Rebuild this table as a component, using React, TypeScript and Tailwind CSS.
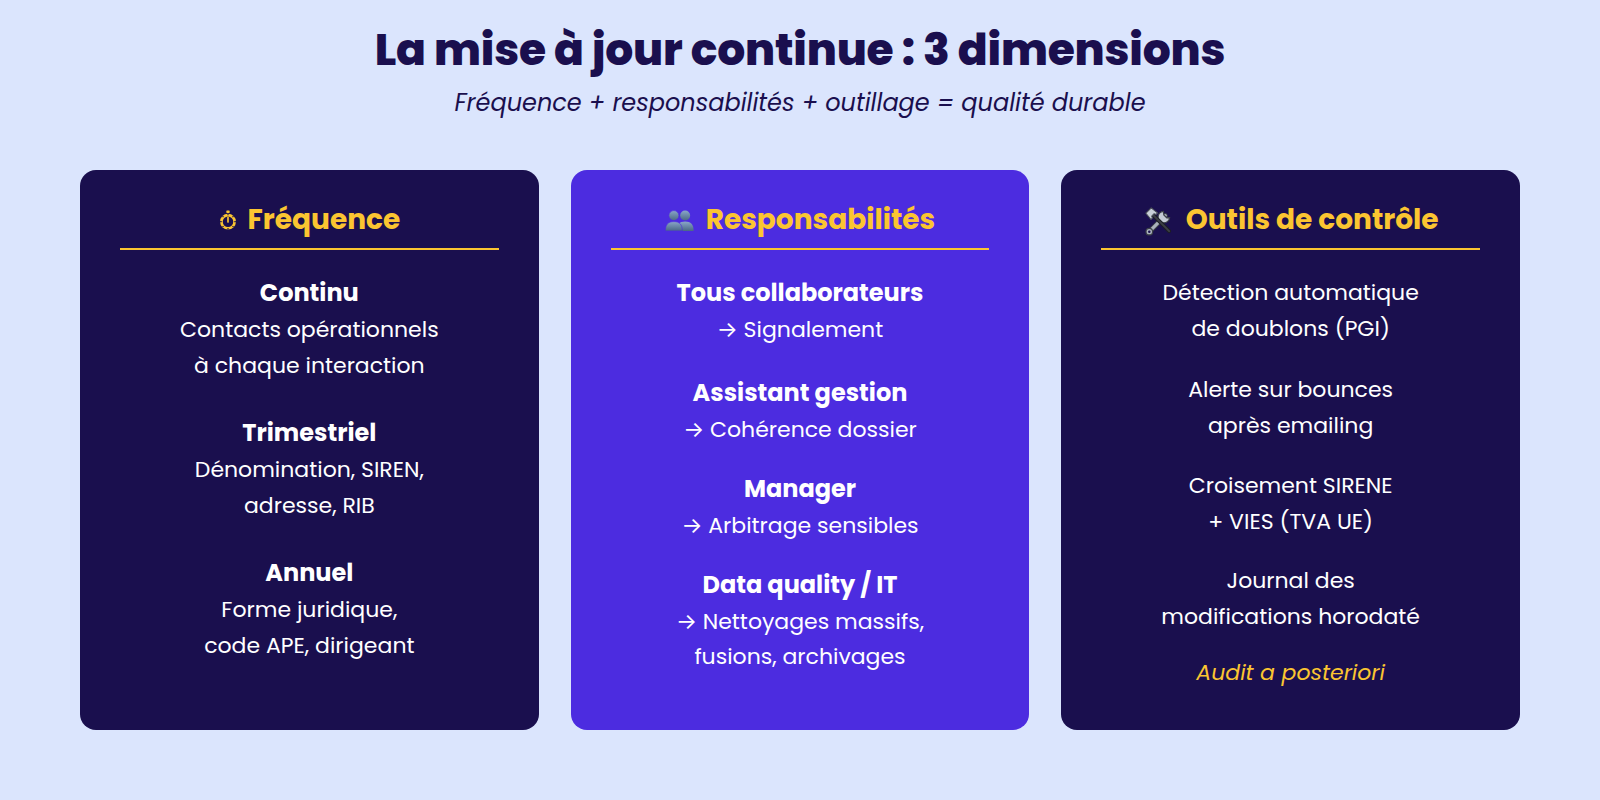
import React from "react";

const Stopwatch = () => (
  <svg width="20" height="20" viewBox="0 0 24 24" aria-hidden="true">
    <rect x="10" y="0.5" width="4" height="3" rx="0.8" fill="#fbc531" />
    <circle cx="12" cy="14" r="9.5" fill="#fbc531" />
    <circle cx="12" cy="14" r="6.3" fill="#1a0f4e" />
    <g stroke="#1a0f4e" strokeWidth="1.4">
      <line x1="12" y1="4.6" x2="12" y2="6.4" />
      <line x1="12" y1="21.6" x2="12" y2="23.4" />
      <line x1="2.6" y1="14" x2="4.4" y2="14" />
      <line x1="19.6" y1="14" x2="21.4" y2="14" />
      <line x1="5.4" y1="7.4" x2="6.6" y2="8.6" />
      <line x1="17.4" y1="19.4" x2="18.6" y2="20.6" />
      <line x1="18.6" y1="7.4" x2="17.4" y2="8.6" />
      <line x1="6.6" y1="19.4" x2="5.4" y2="20.6" />
    </g>
    <line x1="12" y1="14.5" x2="12" y2="9" stroke="#fbc531" strokeWidth="2" strokeLinecap="round" />
  </svg>
);

const Busts = () => (
  <svg width="29" height="22" viewBox="0 0 36 27" aria-hidden="true">
    <defs>
      <linearGradient id="bust" x1="0" y1="0" x2="0" y2="1">
        <stop offset="0" stopColor="#8aa6c8" />
        <stop offset="1" stopColor="#4a6886" />
      </linearGradient>
    </defs>
    <circle cx="25" cy="8" r="6.2" fill="url(#bust)" />
    <path d="M14 27 C14 19 18 15.5 25 15.5 C32 15.5 35.5 19 35.5 27 Z" fill="url(#bust)" />
    <circle cx="11" cy="8" r="6.2" fill="url(#bust)" stroke="#4c2ce0" strokeWidth="0.8" />
    <path d="M0.5 27 C0.5 19 4 15.5 11 15.5 C18 15.5 21.5 19 21.5 27 Z" fill="url(#bust)" stroke="#4c2ce0" strokeWidth="0.8" />
  </svg>
);

const Tools = () => (
  <svg width="31" height="31" viewBox="0 0 32 32" aria-hidden="true">
    {/* wrench */}
    <path d="M7 27 L23 11" stroke="#3b3f47" strokeWidth="5.2" strokeLinecap="round" />
    <path d="M7 27 L23 11" stroke="#aab2bd" strokeWidth="3.2" strokeLinecap="round" />
    <circle cx="6.5" cy="27.5" r="3.4" fill="#aab2bd" stroke="#3b3f47" strokeWidth="1.2" />
    <circle cx="6.5" cy="27.5" r="1.3" fill="#1a0f4e" />
    <path d="M21 6.5 A6 6 0 1 0 27.5 13 L24.5 13.2 L21.5 10.3 Z" fill="#c4cbd4" stroke="#3b3f47" strokeWidth="1.2" />
    {/* hammer */}
    <path d="M10 10 L27 27" stroke="#1d1f24" strokeWidth="4" strokeLinecap="round" />
    <path d="M10 10 L27 27" stroke="#3c3f46" strokeWidth="2" strokeLinecap="round" />
    <path d="M3 8.5 L8.5 3 L15 8.2 L13.5 9.7 L11.5 9 L9 11.5 L9.7 13.5 L8.2 15 Z" fill="#c9d0d8" stroke="#4a4f58" strokeWidth="1.1" strokeLinejoin="round" />
  </svg>
);

type Section = { head?: string; lines: string[]; gap: string; italic?: boolean };

const cards: { title: string; icon: React.ReactNode; gap: string; bg: string; sections: Section[] }[] = [
  {
    title: "Fréquence",
    icon: <Stopwatch />,
    gap: "gap-[9px]",
    bg: "bg-[#1a0f4e]",
    sections: [
      { head: "Continu", lines: ["Contacts opérationnels", "à chaque interaction"], gap: "mt-[24px]" },
      { head: "Trimestriel", lines: ["Dénomination, SIREN,", "adresse, RIB"], gap: "mt-[31px]" },
      { head: "Annuel", lines: ["Forme juridique,", "code APE, dirigeant"], gap: "mt-[31px]" },
    ],
  },
  {
    title: "Responsabilités",
    icon: <Busts />,
    gap: "gap-[12px]",
    bg: "bg-[#4c2ce0]",
    sections: [
      { head: "Tous collaborateurs", lines: ["→ Signalement"], gap: "mt-[24px]" },
      { head: "Assistant gestion", lines: ["→ Cohérence dossier"], gap: "mt-[26px]" },
      { head: "Manager", lines: ["→ Arbitrage sensibles"], gap: "mt-[23px]" },
      { head: "Data quality / IT", lines: ["→ Nettoyages massifs,", "fusions, archivages"], gap: "mt-[22px]" },
    ],
  },
  {
    title: "Outils de contrôle",
    icon: <Tools />,
    gap: "gap-[12px]",
    bg: "bg-[#1a0f4e]",
    sections: [
      { lines: ["Détection automatique", "de doublons (PGI)"], gap: "mt-[25px]" },
      { lines: ["Alerte sur bounces", "après emailing"], gap: "mt-[26px]" },
      { lines: ["Croisement SIRENE", "+ VIES (TVA UE)"], gap: "mt-[25px]" },
      { lines: ["Journal des", "modifications horodaté"], gap: "mt-[24px]" },
      { lines: ["Audit a posteriori"], gap: "mt-[21px]", italic: true },
    ],
  },
];

export default function App() {
  return (
    <div className="min-h-screen bg-[#dbe5fd] font-['Poppins','Inter',sans-serif] text-[#1a0f4e]">
      <div className="pt-[22px]">
        <h1 className="text-center text-[44px] leading-[56px] font-extrabold tracking-[-0.2px]">
          La mise à jour continue : 3 dimensions
        </h1>
        <p className="mt-[9px] text-center text-[24px] leading-[32px] italic">
          Fréquence + responsabilités + outillage = qualité durable
        </p>

        <div className="mt-[51px] grid grid-cols-3 gap-[32px] px-[80px]">
          {cards.map((card) => (
            <div key={card.title} className={`${card.bg} h-[560px] rounded-[16px] px-[40px] pt-[30px] text-center text-white`}>
              <div className={`flex items-center justify-center ${card.gap} border-b-2 border-[#fbc531] pb-[8px]`}>
                <span className="flex items-center">{card.icon}</span>
                <h2 className="text-[28px] leading-[40px] font-bold text-[#fbc531]">{card.title}</h2>
              </div>
              {card.sections.map((s, i) => (
                <div key={i} className={s.gap}>
                  {s.head && <div className="text-[24px] leading-[38px] font-bold">{s.head}</div>}
                  {s.lines.map((l) => (
                    <div
                      key={l}
                      className={`text-[22px] leading-[35.5px] ${s.italic ? "italic text-[#fbc531]" : ""}`}
                    >
                      {l}
                    </div>
                  ))}
                </div>
              ))}
            </div>
          ))}
        </div>
      </div>
    </div>
  );
}
